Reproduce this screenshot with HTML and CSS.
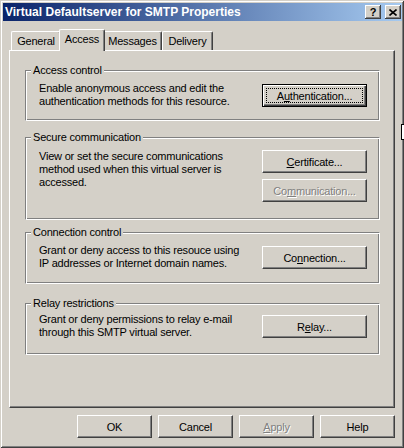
FILE: index.html
```html
<!DOCTYPE html>
<html>
<head>
<meta charset="utf-8">
<link rel="stylesheet" href="styles.css">
</head>
<body>
<div class="window">
  <div class="titlebar">
    <span class="title">Virtual Defaultserver for SMTP Properties</span>
    <div class="tb-btns">
      <span class="tb-btn help">?</span>
      <span class="tb-btn close"><svg width="8" height="7" viewBox="0 0 8 7"><path d="M0.5 0.5 L7.5 6.5 M7.5 0.5 L0.5 6.5" stroke="#000" stroke-width="1.6" fill="none"/></svg></span>
    </div>
  </div>
  <div class="body">
    <div class="tabs">
      <div class="tab t-general">General</div>
      <div class="tab t-access active">Access</div>
      <div class="tab t-messages">Messages</div>
      <div class="tab t-delivery">Delivery</div>
    </div>
    <div class="panel">
      <fieldset class="group g1">
        <legend>Access control</legend>
        <div class="row">
          <p class="desc">Enable anonymous access and edit the<br>authentication methods for this resource.</p>
          <div class="btns"><button class="btn side default">A<u>u</u>thentication...</button></div>
        </div>
      </fieldset>
      <fieldset class="group g2">
        <legend>Secure communication</legend>
        <div class="row">
          <p class="desc">View or set the secure communications<br>method used when this virtual server is<br>accessed.</p>
          <div class="btns">
            <button class="btn side"><u>C</u>ertificate...</button>
            <button class="btn side disabled">Co<u>m</u>munication...</button>
          </div>
        </div>
      </fieldset>
      <fieldset class="group g3">
        <legend>Connection control</legend>
        <div class="row">
          <p class="desc">Grant or deny access to this resouce using<br>IP addresses or Internet domain names.</p>
          <div class="btns"><button class="btn side">Co<u>n</u>nection...</button></div>
        </div>
      </fieldset>
      <fieldset class="group g4">
        <legend>Relay restrictions</legend>
        <div class="row">
          <p class="desc">Grant or deny permissions to relay e-mail<br>through this SMTP virtual server.</p>
          <div class="btns"><button class="btn side">R<u>e</u>lay...</button></div>
        </div>
      </fieldset>
    </div>
    <div class="footer">
      <button class="btn foot">OK</button>
      <button class="btn foot">Cancel</button>
      <button class="btn foot disabled"><u>A</u>pply</button>
      <button class="btn foot">Help</button>
    </div>
  </div>
  <div class="cursor"></div>
</div>
</body>
</html>
```
FILE: styles.css
```css
* { box-sizing: border-box; }
html, body { margin: 0; padding: 0; background: #D4D0C8; }
body {
  font-family: "Liberation Sans", Arial, sans-serif;
  font-size: 11px;
  letter-spacing: -0.2px;
  color: #000;
}
.window {
  position: relative;
  width: 404px;
  height: 448px;
  background: #D4D0C8;
  padding: 3px 2px 2px 3px;
  box-shadow: inset 1px 1px 0 #D4D0C8, inset -1px -1px 0 #404040, inset 2px 2px 0 #fff, inset -2px -2px 0 #808080;
  display: flex;
  flex-direction: column;
}
.titlebar {
  height: 18px;
  display: flex;
  align-items: center;
  justify-content: space-between;
  background: linear-gradient(to right, #0A246A, #A6CAF0);
  padding: 0 1px 0 2px;
  color: #fff;
}
.title {
  font-weight: bold;
  font-size: 12px;
  letter-spacing: 0;
  line-height: 18px;
}
.tb-btns { display: flex; gap: 4px; }
.tb-btn {
  width: 16px;
  height: 14px;
  background: #D4D0C8;
  box-shadow: inset -1px -1px 0 #404040, inset 1px 1px 0 #fff, inset -2px -2px 0 #808080;
  display: flex;
  align-items: center;
  justify-content: center;
  color: #000;
  font-weight: bold;
  font-size: 11px;
  line-height: 14px;
  letter-spacing: 0;
}
.body {
  flex: 1;
  display: flex;
  flex-direction: column;
  padding: 8px 0 0 6px;
}
.tabs {
  display: flex;
  align-items: flex-end;
  height: 21px;
  padding-left: 2px;
}
.tab {
  height: 19px;
  background: #D4D0C8;
  border-top: 1px solid #fff;
  border-left: 1px solid #fff;
  border-right: 1px solid #404040;
  border-top-left-radius: 2px;
  border-top-right-radius: 2px;
  box-shadow: inset -1px 0 0 #808080;
  display: flex;
  align-items: center;
  justify-content: center;
  padding-bottom: 1px;
}
.t-general { width: 50px; }
.t-access { width: 46px; }
.t-messages { width: 59px; }
.t-delivery { width: 51px; }
.tab.active {
  position: relative;
  z-index: 2;
  height: 22px;
  margin: 0 -2px -1px;
  padding-bottom: 3px;
}
.panel {
  width: 386px;
  height: 358px;
  border: 1px solid;
  border-color: #fff #404040 #404040 #fff;
  box-shadow: inset -1px -1px 0 #808080;
  padding: 13px 13px 0 15px;
  display: flex;
  flex-direction: column;
}
.group {
  margin: 0;
  padding: 0;
  min-width: 0;
  width: 355px;
  border: 1px solid;
  border-color: #808080 #fff #fff #808080;
  box-shadow: inset 1px 1px 0 #fff, inset -1px -1px 0 #808080;
}
.group legend {
  margin-left: 5px;
  padding: 0 2px;
  line-height: 13px;
  background: #D4D0C8;
}
.row {
  display: flex;
  justify-content: space-between;
  align-items: flex-start;
  padding: 5px 12px 0 13px;
}
.desc {
  margin: 0;
  line-height: 13px;
  white-space: nowrap;
}
.btns {
  display: flex;
  flex-direction: column;
  gap: 6px;
}
.g1 .row { height: 43px; }
.g1 .btns { margin-top: 2px; }
.g2 { margin-top: 10px; }
.g2 .row { height: 75px; padding-top: 6px; }
.g3 { margin-top: 6px; }
.g3 .row { height: 44px; }
.g3 .btns { margin-top: 2px; }
.g4 { margin-top: 13px; }
.g4 .row { height: 44px; padding-top: 3px; }
.g4 .btns { margin-top: 2px; }
.btn {
  font: inherit;
  letter-spacing: inherit;
  height: 23px;
  padding: 0;
  margin: 0;
  background: #D4D0C8;
  color: #000;
  border: 1px solid;
  border-color: #fff #404040 #404040 #fff;
  box-shadow: inset -1px -1px 0 #808080;
  display: flex;
  align-items: center;
  justify-content: center;
}
.btn.side { width: 105px; }
.btn.foot { width: 75px; }
.btn.default {
  position: relative;
  border-color: #000;
  box-shadow: inset 1px 1px 0 #fff, inset -1px -1px 0 #404040, inset -2px -2px 0 #808080;
}
.btn.default::after {
  content: "";
  position: absolute;
  left: 3px; top: 3px; right: 3px; bottom: 3px;
  border: 1px dotted #000;
}
.btn.disabled {
  color: #808080;
  text-shadow: 1px 1px 0 #fff;
}
.footer {
  width: 386px;
  display: flex;
  justify-content: flex-end;
  gap: 6px;
  margin-top: 7px;
}
.cursor {
  position: absolute;
  left: 401px;
  top: 124px;
  width: 4px;
  height: 16px;
  background: #fff;
  border-left: 1px solid #000;
  border-top: 1px solid #000;
  border-bottom: 1px solid #000;
}
```
